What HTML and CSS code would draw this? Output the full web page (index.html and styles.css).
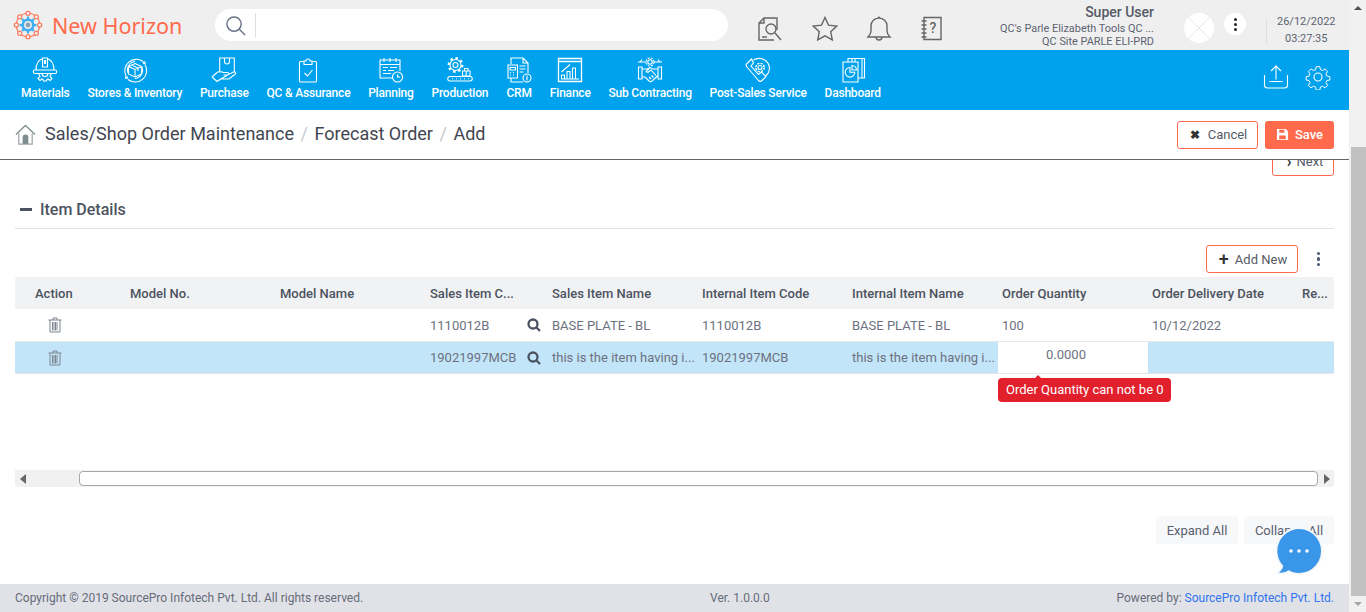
FILE: index.html
```html
<!DOCTYPE html>
<html lang="en">

<head>
    <meta charset="UTF-8" />
    <meta name="viewport" content="width=device-width, initial-scale=1.0" />
    <title>Forecast Order</title>
    <link rel="stylesheet" href="styles.css">
</head>

<body>
    <div class="page">
        <div class="main">
            <header class="topbar">
                <div class="logo">
                    <svg class="logo-icon" viewBox="0 0 32 32" fill="#efefef" stroke="#ff6a4d" stroke-width="1.1">
                        <circle cx="16" cy="16" r="12.5" fill="none" />
                        <circle cx="16" cy="3.5" r="2.2" /><circle cx="24.8" cy="7.2" r="2.2" /><circle cx="28.5" cy="16" r="2.2" /><circle cx="24.8" cy="24.8" r="2.2" /><circle cx="16" cy="28.5" r="2.2" /><circle cx="7.2" cy="24.8" r="2.2" /><circle cx="3.5" cy="16" r="2.2" /><circle cx="7.2" cy="7.2" r="2.2" />
                        <circle cx="16" cy="16" r="7" fill="#41aeef" stroke="none" />
                        <path d="M16 7v4M16 21v4M7 16h4M21 16h4M9.6 9.6l3 3M19.4 19.4l3 3M9.6 22.4l3-3M19.4 12.6l3-3" stroke="#41aeef" stroke-width="2.4" />
                        <circle cx="16" cy="16" r="3.4" fill="#8fa3b5" stroke="#efefef" stroke-width="1.6" />
                    </svg>
                    <span>New Horizon</span>
                </div>
                <div class="search-box">
                    <svg class="search-icon" viewBox="0 0 22 22" fill="none" stroke="#6a7286" stroke-width="1.5">
                        <circle cx="9.5" cy="9.5" r="7.5" /><path d="M15 15l6 6" />
                    </svg>
                </div>
                <div class="top-icons">
                    <svg viewBox="0 0 26 26" fill="none" stroke="#666" stroke-width="1.4">
                        <path d="M20 14V2H7L2 7v17h15M7 2v5H2" /><circle cx="14" cy="13" r="5" /><path d="M18 17l6 7M5 21h5" />
                    </svg>
                    <svg viewBox="0 0 26 26" fill="none" stroke="#666" stroke-width="1.4">
                        <path d="M13 1.5l3.5 7.6 8.3 1-6.1 5.6 1.6 8.2-7.3-4.1-7.3 4.1 1.6-8.2-6.1-5.6 8.3-1z" />
                    </svg>
                    <svg viewBox="0 0 26 26" fill="none" stroke="#666" stroke-width="1.4">
                        <path d="M2 21c2-2 3-3 3-6V10a8 8 0 0 1 16 0v5c0 3 1 4 3 6zM10 21a3 3 0 0 0 6 0M12 2.2a1 1 0 0 1 2 0" />
                    </svg>
                    <svg viewBox="0 0 26 26" fill="none" stroke="#666" stroke-width="1.4">
                        <path d="M3 1.5h17v22H3zM.5 5h5M.5 9h5M.5 13h5M.5 17h5M.5 21h5" />
                        <text x="8.5" y="17" class="help-mark">?</text>
                    </svg>
                </div>
                <div class="user-info">
                    <div class="user-name">Super User</div>
                    <div>QC's Parle Elizabeth Tools QC ...</div>
                    <div>QC Site PARLE ELI-PRD</div>
                </div>
                <div class="avatar">
                    <svg viewBox="0 0 30 30" stroke="#e6e6e6" stroke-width="1"><path d="M4 4l22 22M26 4L4 26" /></svg>
                </div>
                <div class="user-menu"><span></span><span></span><span></span></div>
                <div class="clock">
                    <div>26/12/2022</div>
                    <div>03:27:35</div>
                </div>
            </header>

            <nav class="menubar">
                <ul class="menu">
                    <li>
                        <svg viewBox="0 0 26 26"><path d="M4 13C4 7 7 3 10.5 1.8M15.5 1.8C19 3 22 7 22 13M10.5 1h5v9h-5zM12.5 3.5h1v3h-1zM3 13h20a1.7 1.7 0 0 1 0 3.5H3A1.7 1.7 0 0 1 3 13zM7 16.5c0 1 .5 2 1 3l-2 2 2 2 2-1.5 1 .5.5 1.5h3l.5-1.500 1-.5 2 1.500 2-2-2-2c.5-1 1-2 1-3M10 16.500a3 3 0 0 0 6 0" /></svg>
                        Materials
                    </li>
                    <li>
                        <svg viewBox="0 0 26 26"><path d="M4 19A11.5 11.5 0 0 1 21 4.5M23 7.5A11.5 11.5 0 0 1 6 22.5M6.5 17A8.5 8.5 0 0 1 13 4.5M19.5 9A8.5 8.5 0 0 1 13 21.5M13 6.5l6.5 3V17L13 20l-6.5-3V9.5zM6.5 9.5l6.5 3 6.5-3M13 12.5V20M9.5 8l6.5 3v3" /><circle cx="22.3" cy="5.8" r="1" /><circle cx="4.5" cy="20.5" r="1" /></svg>
                        Stores &amp; Inventory
                    </li>
                    <li>
                        <svg viewBox="0 0 26 26"><path d="M10.5 15H8.700V1h14.600v14.500M13.500 1v3.500a2.500 2.500 0 0 0 5 0V1M1 20l5-4.500c1.500-1 3-1.200 4.500-.7l2 .7h4c1.500 0 1.500 2.500 0 2.500h-4M16.500 18l6-3c1.500-.7 3 1 1.500 2.300L18 22H9.500L6 24.500zM1 20l5 4.500" /></svg>
                        Purchase
                    </li>
                    <li>
                        <svg viewBox="0 0 26 26"><path d="M9 4.500H5.500a1 1 0 0 0-1 1V24a1 1 0 0 0 1 1h15a1 1 0 0 0 1-1V5.500a1 1 0 0 0-1-1H17M9 7.500V4h2a2 2 0 0 1 4 0h2v3.500zM9.500 16l3 3 5-6" /></svg>
                        QC &amp; Assurance
                    </li>
                    <li>
                        <svg viewBox="0 0 26 26"><path d="M14.500 21H2V3h20v11M2 7.500h20M6 1v4M12 1v4M18 1v4M5 10.500h5M12 10.500h7M5 13.500h3M10 13.500h6M5 16.500h8" /><circle cx="19.500" cy="20" r="5" /><path d="M19.500 17.500V20H22" /></svg>
                        Planning
                    </li>
                    <li>
                        <svg viewBox="0 0 26 26"><circle cx="8.500" cy="8" r="2.500" /><circle cx="8.500" cy="8" r="5.500" /><circle cx="8.500" cy="8" r="6.800" stroke-width="2.200" stroke-dasharray="2.500 2.800" /><path d="M15.500 14H23v5h-7.500zM19.200 14v5M17.500 11.500H21V14h-3.500zM3 19.500h20a2.200 2.200 0 0 1 0 4.500H3a2.200 2.200 0 0 1 0-4.500zM5 21.800h1M9 21.800h1M13 21.800h1M17 21.800h1M21 21.800h1" /></svg>
                        Production
                    </li>
                    <li>
                        <svg viewBox="0 0 26 26"><path d="M5 7V1h12l5 5v10M17 1v5h5M5 21v4h12M2 8h9.500v13H2zM4 10.500h5.500V13H4zM4 15.500h1M7 15.500h1M4 18h1M7 18h1M13.500 9h6M13.500 12h6M13.500 15h4" /><circle cx="21" cy="21" r="4" /><path d="M21 18.500v5" /></svg>
                        CRM
                    </li>
                    <li>
                        <svg viewBox="0 0 26 26"><path stroke-width="1.300" d="M1.500 1.500h23v23h-23zM1.500 4.500h23" /><path d="M4 22h18M4.500 22v-4h3v4M10 22v-7.500h3V22M15.500 22V11h3v11M4.500 15L13 7.500" /></svg>
                        Finance
                    </li>
                    <li>
                        <svg viewBox="0 0 26 26"><circle cx="13" cy="5" r="2.200" /><circle cx="13" cy="5" r="4" stroke-dasharray="2 1.200" /><path d="M1 5h8M17 5h8M5 2.500L3 5M21 2.500L23 5M1.500 10H5v12H1.500zM21 10h3.500v12H21zM5 12h5l3-1.500 3 1.500h5M5 20h3l4 4c1.500 1 3 .5 4-1l5-4.500M13 10.500l-4 4c.5 1 2 1 3 0l2-1.500 5 5.500M14 22l-2-2M16.500 20.500l-2-2" /></svg>
                        Sub Contracting
                    </li>
                    <li>
                        <svg viewBox="0 0 26 26"><path d="M6.500 2L2 6.500c-1 1-1 2.500 0 3.500l11.500 13.500c1 1 2.500 1 3.500 0l4-4-4.500-4.500-3 2.500-7.500-8.500L8.500 6zM8.500 3a10.500 10.500 0 0 1 16 8c0 3.500-1.500 6-4 8" /><circle cx="15" cy="10.500" r="2" /><circle cx="15" cy="10.500" r="4.200" stroke-dasharray="2.200 1.100" stroke-width="1.400" /></svg>
                        Post-Sales Service
                    </li>
                    <li>
                        <svg viewBox="0 0 26 26"><path d="M3 5h15v20H3zM8 5V1.500h16.500V21H18M22 1.500V21M12 1.500V5M15 1.500V5" /><path d="M10 10.500a4.800 4.800 0 1 0 4.800 4.800H10zM12 8.500a4.800 4.800 0 0 1 4.500 4.500H12z" /></svg>
                        Dashboard
                    </li>
                </ul>
                <div class="menu-actions">
                    <svg viewBox="0 0 26 26"><path d="M1.500 11v10c0 2 1 3 3 3h17c2 0 3-1 3-3V11M6.500 17.500h13M13 15.500V2M8 7l5-5 5 5" /></svg>
                    <svg viewBox="0 0 26 26"><circle cx="13" cy="13" r="4" /><path d="M11 1.500h4l.7 3.300 2.300 1 2.900-1.800 2.800 2.800-1.800 2.900 1 2.300 3.300.7v3.600l-3.300.7-1 2.300 1.800 2.900-2.800 2.800-2.900-1.800-2.300 1-.7 3.300h-4l-.7-3.300-2.300-1-2.900 1.800-2.800-2.800 1.800-2.900-1-2.300-3.300-.7v-3.600l3.300-.7 1-2.300-1.800-2.900 2.800-2.800 2.900 1.800 2.300-1z" transform="translate(1.300 1.300) scale(.9)" /></svg>
                </div>
            </nav>

            <div class="breadcrumb-bar">
                <svg class="home-icon" viewBox="0 0 22 22">
                    <path d="M1 11L11 1.500 21 11" fill="none" stroke="#7f8c8d" stroke-width="1.300" />
                    <path d="M4 10v11h14V10" fill="none" stroke="#9aa5a5" stroke-width="1.300" />
                    <path d="M8 21v-7a3 3 0 0 1 6 0v7z" fill="#7f8c8d" />
                </svg>
                <div class="breadcrumb">
                    <span>Sales/Shop Order Maintenance</span><i>/</i><span>Forecast Order</span><i>/</i><span>Add</span>
                </div>
                <button class="btn btn-outline cancel-btn"><b class="x-mark">✖</b>Cancel</button>
                <button class="btn btn-save">
                    <svg viewBox="0 0 14 14"><path d="M1 1h9.500L13 3.500V13H1z" fill="#fff" /><path d="M3.500 2H9v3H3.500zM3.500 8h7v4h-7z" fill="#ff6a4d" /></svg>
                    Save
                </button>
            </div>

            <div class="content">
                <div class="next-row"><button class="btn btn-outline next-btn"><b class="chevron">›</b>Next</button></div>

                <h3 class="section-title"><span class="minus"></span>Item Details</h3>

                <div class="table-tools">
                    <button class="btn btn-outline add-btn"><b class="plus">+</b>Add New</button>
                    <div class="dots"><span></span><span></span><span></span></div>
                </div>

                <div class="grid">
                    <div class="grid-row grid-head">
                        <div class="action-head">Action</div>
                        <div>Model No.</div>
                        <div>Model Name</div>
                        <div>Sales Item C...</div>
                        <div>Sales Item Name</div>
                        <div>Internal Item Code</div>
                        <div>Internal Item Name</div>
                        <div>Order Quantity</div>
                        <div>Order Delivery Date</div>
                        <div>Re...</div>
                    </div>
                    <div class="grid-row">
                        <div class="trash-cell">
                            <svg class="trash" viewBox="0 0 14 16"><path d="M.5 3h13M5 3V1h4v2M2 3v12h10V3M4.500 5v8.500M6 5v8.500M7.500 5v8.500M9 5v8.500" /></svg>
                        </div>
                        <div></div>
                        <div></div>
                        <div class="code-cell">1110012B
                            <svg class="lookup" viewBox="0 0 14 14"><circle cx="6" cy="6" r="4.500" /><path d="M9.500 9.500L13 13" /></svg>
                        </div>
                        <div>BASE PLATE - BL</div>
                        <div>1110012B</div>
                        <div>BASE PLATE - BL</div>
                        <div>100</div>
                        <div>10/12/2022</div>
                        <div></div>
                    </div>
                    <div class="grid-row row-active">
                        <div class="trash-cell">
                            <svg class="trash" viewBox="0 0 14 16"><path d="M.5 3h13M5 3V1h4v2M2 3v12h10V3M4.500 5v8.500M6 5v8.500M7.500 5v8.500M9 5v8.500" /></svg>
                        </div>
                        <div></div>
                        <div></div>
                        <div class="code-cell">19021997MCB
                            <svg class="lookup" viewBox="0 0 14 14"><circle cx="6" cy="6" r="4.500" /><path d="M9.500 9.500L13 13" /></svg>
                        </div>
                        <div>this is the item having i...</div>
                        <div>19021997MCB</div>
                        <div>this is the item having i...</div>
                        <div class="qty-cell">
                            0.0000
                            <div class="error-tip">Order Quantity can not be 0</div>
                        </div>
                        <div></div>
                        <div></div>
                    </div>
                </div>

                <div class="hscroll">
                    <span class="arrow-left"></span>
                    <div class="hscroll-track"><div class="hscroll-thumb"></div></div>
                    <span class="arrow-right"></span>
                </div>

                <div class="expand-row">
                    <button class="btn btn-light">Expand All</button>
                    <button class="btn btn-light">Collapse All</button>
                </div>

                <div class="chat-bubble">
                    <svg viewBox="0 0 46 46">
                        <path d="M23 1a22 22 0 1 1-10.500 41.300c-2.500 1.700-6 2.700-9.500 2.200 2.200-1.700 3.800-4 4.300-6.500A22 22 0 0 1 23 1z" fill="#3a96e8" stroke="#f2f6fb" stroke-width="3.500" paint-order="stroke" />
                        <circle cx="15" cy="23" r="1.700" fill="#fff" /><circle cx="23" cy="23" r="1.700" fill="#fff" /><circle cx="31" cy="23" r="1.700" fill="#fff" />
                    </svg>
                </div>
            </div>

            <footer class="footer">
                <div>Copyright © 2019 SourcePro Infotech Pvt. Ltd. All rights reserved.</div>
                <div>Ver. 1.0.0.0</div>
                <div>Powered by: <a href="#">SourcePro Infotech Pvt. Ltd.</a></div>
            </footer>
        </div>

        <div class="vscroll">
            <span class="arrow-up"></span>
            <div class="vscroll-track"><div class="vscroll-thumb"></div></div>
            <span class="arrow-down"></span>
        </div>
    </div>
</body>

</html>
```

FILE: styles.css
```css
* {
    margin: 0;
    padding: 0;
    box-sizing: border-box;
    font-family: Roboto, sans-serif;
}

html,
body {
    height: 100%;
    overflow: hidden;
}

.page {
    display: flex;
    height: 100vh;
}

.main {
    flex: 1;
    min-width: 0;
    display: flex;
    flex-direction: column;
}

/* top bar */
.topbar {
    height: 50px;
    background: #efefef;
    display: flex;
    align-items: center;
    flex: none;
}

.logo {
    width: 215px;
    padding-left: 13px;
    display: flex;
    align-items: center;
    gap: 9px;
    color: #ff6a4d;
    flex: none;
}

.logo span {
    font-family: "Noto Sans", sans-serif;
    font-size: 21.5px;
}

.logo-icon {
    width: 30px;
    height: 30px;
}

.search-box {
    width: 513px;
    height: 32px;
    background: white;
    border-radius: 16px;
    display: flex;
    align-items: center;
    padding-left: 10px;
    flex: none;
}

.search-icon {
    width: 21px;
    height: 21px;
    margin-right: 9px;
}

.search-box::after {
    content: "";
    width: 1px;
    height: 25px;
    background: #dcdfe6;
}

.top-icons {
    display: flex;
    gap: 28.5px;
    margin-left: 29px;
    padding-top: 8px;
    width: 190px;
    flex: none;
}

.top-icons svg {
    width: 26px;
    height: 26px;
    flex: none;
}

.help-mark {
    font-size: 14px;
    fill: #666;
    stroke: none;
    font-weight: 500;
}

.user-info {
    width: 207px;
    text-align: right;
    font-size: 10.9px;
    line-height: 13px;
    color: #5c6370;
    flex: none;
}

.user-name {
    font-size: 14px;
    font-weight: 500;
    line-height: 20px;
    color: #555b66;
}

.avatar {
    width: 30px;
    height: 30px;
    border-radius: 50%;
    background: white;
    margin-left: 30px;
    margin-top: 6px;
    flex: none;
}

.avatar svg {
    display: block;
}

.user-menu {
    width: 22px;
    height: 22px;
    border-radius: 50%;
    background: white;
    margin-left: 10px;
    margin-bottom: 2px;
    display: flex;
    flex-direction: column;
    align-items: center;
    justify-content: center;
    gap: 2px;
    flex: none;
}

.user-menu span {
    width: 3px;
    height: 3px;
    border-radius: 50%;
    background: #222;
}

.clock {
    margin: 12px 0 0 20px;
    padding: 0 0 3px 10px;
    height: 26px;
    border-left: 1px solid #dedede;
    text-align: center;
    font-size: 11px;
    line-height: 17px;
    color: #5c6370;
    display: flex;
    flex-direction: column;
    justify-content: center;
}

/* blue menu */
.menubar {
    height: 60px;
    background: #00a2ed;
    display: flex;
    justify-content: space-between;
    flex: none;
}

.menu {
    list-style: none;
    display: flex;
    padding: 7px 0 0 21px;
    gap: 17.8px;
}

.menu li {
    display: flex;
    flex-direction: column;
    align-items: center;
    gap: 3px;
    color: white;
    font-size: 12px;
    font-weight: 500;
    letter-spacing: -0.2px;
    white-space: nowrap;
}

.menu svg,
.menu-actions svg {
    width: 26px;
    height: 26px;
    fill: none;
    stroke: white;
    stroke-width: 1.1;
}

.menu-actions {
    display: flex;
    gap: 16px;
    padding: 14px 18px 0 0;
}

/* breadcrumb */
.breadcrumb-bar {
    height: 50px;
    background: white;
    border-bottom: 1px solid #666;
    display: flex;
    align-items: center;
    padding: 0 15px;
    flex: none;
}

.home-icon {
    width: 21px;
    height: 21px;
    margin-right: 9px;
}

.breadcrumb {
    flex: 1;
    font-size: 18px;
    color: #3f4650;
    padding-bottom: 2px;
}

.breadcrumb i {
    font-style: normal;
    color: #c5c8cc;
    padding: 0 6.5px;
}

.btn {
    font-size: 13px;
    border-radius: 3px;
    border: 1px solid transparent;
    background: white;
    color: #555b66;
    display: flex;
    align-items: center;
    justify-content: center;
}

.btn-outline {
    border-color: #ff6a4d;
}

.cancel-btn {
    width: 81px;
    height: 28px;
    gap: 8px;
    padding-left: 2px;
    margin-right: 7px;
}

.x-mark {
    font-size: 12px;
    color: #333;
}

.btn-save {
    width: 69px;
    height: 28px;
    gap: 6px;
    background: #ff6a4d;
    color: white;
    font-weight: 500;
}

.btn-save svg {
    width: 13px;
    height: 13px;
}

/* content */
.content {
    flex: 1;
    min-height: 0;
    overflow: hidden;
    position: relative;
    padding: 0 15px;
    background: white;
}

.next-row {
    display: flex;
    justify-content: flex-end;
    margin-top: -13px;
}

.next-btn {
    width: 62px;
    height: 29px;
    gap: 5px;
    padding-left: 4px;
}

.chevron {
    font-size: 16px;
    line-height: 12px;
    color: #333;
}

.section-title {
    margin-top: 21px;
    height: 32px;
    border-bottom: 1px solid #dee2e6;
    font-size: 16px;
    font-weight: 500;
    color: #4c5360;
    display: flex;
    align-items: flex-start;
    gap: 8px;
    padding: 3px 0 0 5px;
}

.minus {
    width: 12px;
    height: 3px;
    background: #4c5360;
    margin-top: 8px;
}

.table-tools {
    display: flex;
    justify-content: flex-end;
    align-items: center;
    margin-top: 16px;
    height: 28px;
}

.add-btn {
    width: 92px;
    height: 28px;
    gap: 6px;
    padding-left: 2px;
}

.plus {
    font-size: 18px;
    font-weight: 500;
    line-height: 14px;
    color: #333;
}

.dots {
    width: 36px;
    padding-left: 5px;
    display: flex;
    flex-direction: column;
    align-items: center;
    gap: 2px;
}

.dots span {
    width: 3.5px;
    height: 3.5px;
    border-radius: 50%;
    background: #495770;
}

.grid {
    margin-top: 4px;
    font-size: 13px;
    color: #6c7280;
}

.grid-row {
    display: grid;
    grid-template-columns: 111px 150px 150px 122px 150px 150px 150px 150px 150px 36px;
    height: 33px;
    align-items: center;
    border-bottom: 1px solid #e6e6e6;
}

.grid-row > div {
    padding-left: 4px;
    height: 100%;
    display: flex;
    align-items: center;
    white-space: nowrap;
}

.grid-head {
    height: 32px;
    background: #f1f2f4;
    border: none;
    border-radius: 3px 3px 0 0;
    color: #4c5360;
    font-weight: 500;
}

.grid-row > .action-head {
    padding-left: 20px;
}

.grid-row > .trash-cell {
    padding-left: 33px;
}

.trash {
    width: 14px;
    height: 16px;
    fill: none;
    stroke: #7c8590;
    stroke-width: 1;
}

.code-cell {
    justify-content: space-between;
    padding-right: 7px;
}

.lookup {
    width: 14px;
    height: 14px;
    fill: none;
    stroke: #4c5360;
    stroke-width: 2.3;
    flex: none;
}

.row-active {
    background: #c3e5f9;
    height: 32px;
}

.grid-row > .qty-cell {
    background: white;
    position: relative;
    justify-content: center;
    align-items: flex-start;
    padding: 5px 14px 0 0;
}

.error-tip {
    position: absolute;
    top: 36px;
    left: 0;
    background: #e2202c;
    color: white;
    font-size: 13px;
    line-height: 24px;
    padding: 0 7.5px 0 8px;
    border-radius: 4px;
}

.error-tip::before {
    content: "";
    position: absolute;
    top: -3px;
    left: 37px;
    border-left: 3px solid transparent;
    border-right: 3px solid transparent;
    border-bottom: 3px solid #e2202c;
}

.hscroll {
    margin-top: 96px;
    height: 17px;
    background: #f1f1f1;
    border-radius: 0 0 3px 3px;
    display: flex;
    align-items: center;
}

.arrow-left,
.arrow-right {
    width: 0;
    height: 0;
    border-top: 5px solid transparent;
    border-bottom: 5px solid transparent;
    flex: none;
}

.arrow-left {
    border-right: 6px solid #666;
    margin-left: 5px;
}

.arrow-right {
    border-left: 6px solid #666;
    margin-right: 4px;
}

.hscroll-track {
    flex: 1;
    padding-left: 53px;
    padding-right: 6px;
}

.hscroll-thumb {
    height: 15px;
    background: white;
    border: 1px solid #a8a8a8;
    border-radius: 4px;
}

.expand-row {
    display: flex;
    justify-content: flex-end;
    gap: 6px;
    margin-top: 29px;
}

.btn-light {
    height: 28px;
    width: 90px;
    background: #f6f8fa;
    border: none;
    border-radius: 4px;
    color: #5a6170;
}

.btn-light:first-child {
    width: 82px;
}

.chat-bubble {
    position: absolute;
    right: 27px;
    top: 368px;
    width: 46px;
    height: 46px;
}

.chat-bubble svg {
    display: block;
    overflow: visible;
}

/* footer */
.footer {
    height: 28px;
    background: #e1e2e8;
    display: grid;
    grid-template-columns: 695px 1fr auto;
    align-items: center;
    padding: 0 15px;
    font-size: 12px;
    color: #666c78;
    flex: none;
}

.footer a {
    color: #2f74f0;
    text-decoration: none;
}

/* page scrollbar */
.vscroll {
    width: 17px;
    background: #f1f1f1;
    display: flex;
    flex-direction: column;
    align-items: center;
    flex: none;
}

.arrow-up,
.arrow-down {
    width: 0;
    height: 0;
    border-left: 4px solid transparent;
    border-right: 4px solid transparent;
    margin: 6px 0;
    flex: none;
}

.arrow-up {
    border-bottom: 4px solid #505050;
}

.arrow-down {
    border-top: 4px solid #a3a3a3;
}

.vscroll-track {
    flex: 1;
    width: 100%;
    padding: 131px 0 0 2px;
}

.vscroll-thumb {
    height: 100%;
    background: #c1c1c1;
}
```
